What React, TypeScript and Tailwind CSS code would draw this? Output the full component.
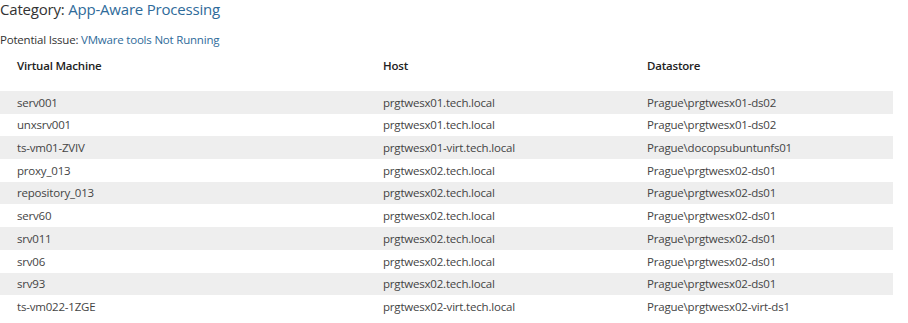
import React from "react";

type Row = { vm: string; host: string; datastore: string };

const rows: Row[] = [
  { vm: "serv001", host: "prgtwesx01.tech.local", datastore: "Prague\\prgtwesx01-ds02" },
  { vm: "unxsrv001", host: "prgtwesx01.tech.local", datastore: "Prague\\prgtwesx01-ds02" },
  { vm: "ts-vm01-ZVIV", host: "prgtwesx01-virt.tech.local", datastore: "Prague\\docopsubuntunfs01" },
  { vm: "proxy_013", host: "prgtwesx02.tech.local", datastore: "Prague\\prgtwesx02-ds01" },
  { vm: "repository_013", host: "prgtwesx02.tech.local", datastore: "Prague\\prgtwesx02-ds01" },
  { vm: "serv60", host: "prgtwesx02.tech.local", datastore: "Prague\\prgtwesx02-ds01" },
  { vm: "srv011", host: "prgtwesx02.tech.local", datastore: "Prague\\prgtwesx02-ds01" },
  { vm: "srv06", host: "prgtwesx02.tech.local", datastore: "Prague\\prgtwesx02-ds01" },
  { vm: "srv93", host: "prgtwesx02.tech.local", datastore: "Prague\\prgtwesx02-ds01" },
  { vm: "ts-vm022-1ZGE", host: "prgtwesx02-virt.tech.local", datastore: "Prague\\prgtwesx02-virt-ds1" },
];

const App = () => {
  return (
    <div className="w-[908px] h-[323px] bg-white overflow-hidden font-['Open_Sans',sans-serif] text-[#333333]">
      <div className="h-[20px] text-[15px] leading-[19px] tracking-[-0.2px]">
        Category: <span className="text-[#2f6b9a]">App-Aware Processing</span>
      </div>
      <div className="mt-[12px] h-[16px] text-[11.5px] leading-[16px] tracking-[-0.2px]">
        Potential Issue: <span className="text-[#2f6b9a]">VMware tools Not Running</span>
      </div>
      <div className="w-[893px]">
        <div className="flex h-[43px] pt-[9px] pl-[17px] text-[11.5px] font-semibold text-[#222222] tracking-[-0.2px]">
          <div className="w-[366px]">Virtual Machine</div>
          <div className="w-[264px]">Host</div>
          <div>Datastore</div>
        </div>
        {rows.map((r, i) => (
          <div
            key={i}
            className={`flex items-center h-[22.7px] pl-[17px] text-[11.5px] text-[#444444] tracking-[-0.2px] ${
              i % 2 === 0 ? "bg-[#eeeeee]" : "bg-white"
            }`}
          >
            <div className="w-[366px]">{r.vm}</div>
            <div className="w-[264px]">{r.host}</div>
            <div>{r.datastore}</div>
          </div>
        ))}
      </div>
    </div>
  );
};

export default App;
